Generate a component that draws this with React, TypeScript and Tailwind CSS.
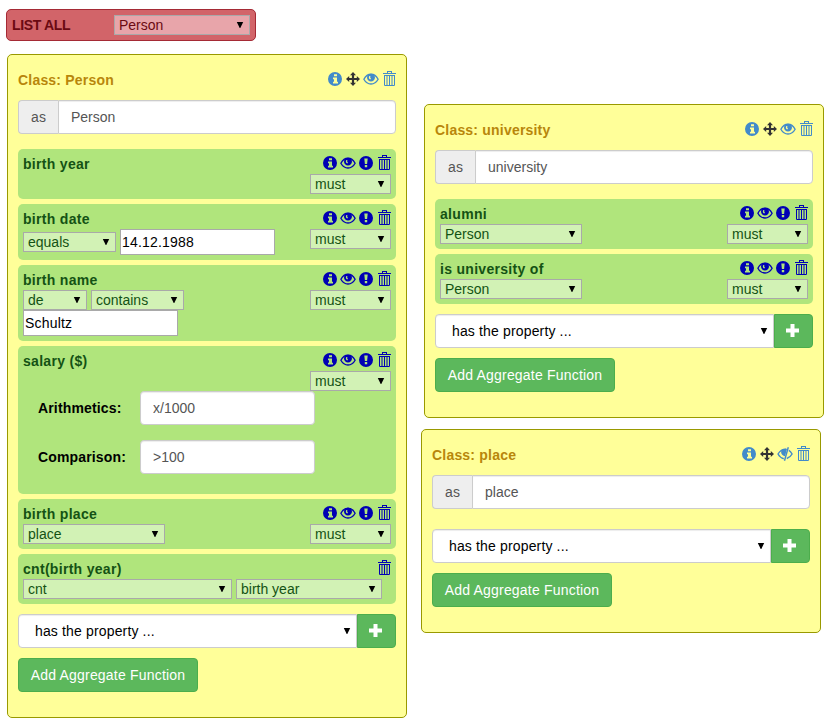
import React from "react";

type IconName = "info" | "move" | "eye" | "eyeClosed" | "alert" | "trash";

function Icon({ name }: { name: IconName }) {
  return (
    <svg className="block h-4 w-3.5 overflow-visible" viewBox="0 0 14 16" fill="currentColor">
      {name === "info" && (
        <path
          fillRule="evenodd"
          d="M7 1a7 7 0 1 0 0 14A7 7 0 0 0 7 1ZM6 3.200h3v2H6ZM5 6.500h4v4.300h1v1.700H5v-1.700h1V8.200H5Z"
        />
      )}
      {name === "alert" && (
        <path
          fillRule="evenodd"
          d="M7 1a7 7 0 1 0 0 14A7 7 0 0 0 7 1ZM5.300 3.400h3.400L8.100 9H5.900ZM5.800 10h2.400v2.200H5.800Z"
        />
      )}
      {name === "move" && (
        <path d="M7 1l3 3.200H8.100v2.700h2.700V5L14 8l-3.200 3V9.100H8.100v2.700H10L7 15l-3-3.200h1.900V9.100H3.200V11L0 8l3.200-3v1.900h2.700V4.200H4Z" />
      )}
      {name === "eye" && (
        <g>
          <path
            d="M-.1 8.200C1.600 5 4.200 3.100 7 3.100S12.400 5 14.100 8.200C12.400 11.300 9.800 13 7 13S1.600 11.300-.1 8.200Z"
            fill="none"
            stroke="currentColor"
            strokeWidth="1.350"
          />
          <path
            fillRule="evenodd"
            d="M4.200 3.200C5.900 2.500 8.100 2.500 9.800 3.200C11.400 5 11.300 7.900 9.900 9.300C8.300 10.900 5.700 10.900 4.100 9.300C2.700 7.900 2.600 5 4.200 3.200ZM5.300 5C4.400 6.300 4.900 8 6.300 8.500L7 7.500C6.100 7 6 6 6.500 5.200Z"
          />
        </g>
      )}
      {name === "eyeClosed" && (
        <g>
          <path
            d="M8 3.100C4.700 3.100 1.800 4.900 0 8C1.500 10.700 3.500 12.200 5.800 12.700M10.800 4.300C12.200 5.100 13.200 6.400 14.100 8C13 10 11.300 11.700 8.800 12.500"
            fill="none"
            stroke="currentColor"
            strokeWidth="1.4"
          />
          <path d="M4 3.500C5.500 2.700 7.400 2.500 9 2.800L7 10.300C5 10 3.400 8.500 3.200 6.500C3.100 5.300 3.400 4.200 4 3.500Z" />
          <path d="M10.300 1.200L6.500 14.800" fill="none" stroke="currentColor" strokeWidth="1.4" />
        </g>
      )}
      {name === "trash" && (
        <path
          fillRule="evenodd"
          d="M5 0h5v2h4v1H1V2h4ZM6 1v1h3V1ZM2 4h11v10.200l-.8.8H2.800L2 14.200ZM3 5v9h1.500V5ZM5.500 5v9H7V5ZM8 5v9h1.500V5ZM10.500 5v9H12V5Z"
        />
      )}
    </svg>
  );
}

function Icons({ names, header = false }: { names: IconName[]; header?: boolean }) {
  return (
    <div className={header ? "flex gap-1 text-[#428bca]" : "flex gap-1 pt-px text-[#0000b4]"}>
      {names.map((n) => (
        <span key={n} className={n === "move" ? "text-[#333]" : ""}>
          <Icon name={n} />
        </span>
      ))}
    </div>
  );
}

function Caret() {
  return (
    <svg className="block h-1.5 w-1.5 shrink-0 overflow-visible text-black" viewBox="0 0 6 6" fill="currentColor">
      <path d="M-.2 0h6.400L3.300 6h-.6Z" />
    </svg>
  );
}

function Select({ value, width }: { value: string; width: string }) {
  return (
    <div
      className={`flex h-5 shrink-0 items-center justify-between border border-[#a9a9a9] bg-[#d2f2b5] pr-1.5 pl-1 leading-[18px] text-[#145214] ${width}`}
    >
      <span>{value}</span>
      <Caret />
    </div>
  );
}

function PlainInput({ value }: { value: string }) {
  return (
    <input
      readOnly
      value={value}
      className="block h-[26px] w-[155px] border border-[#a9a9a9] bg-white px-px tracking-[0.2px] text-black outline-none"
    />
  );
}

function FormInput({ value, className }: { value: string; className: string }) {
  return (
    <input
      readOnly
      value={value}
      className={`block h-[34px] border border-[#ccc] bg-white px-3 text-[#555] shadow-[inset_0_1px_1px_rgba(0,0,0,0.075)] outline-none ${className}`}
    />
  );
}

type RowProps = { title: string; children?: React.ReactNode; aggregate?: boolean; height: string };

function Row({ title, children, aggregate = false, height }: RowProps) {
  return (
    <section className={`rounded-[5px] bg-[#b0e57c] p-[5px] ${height}`}>
      <header className="flex h-5 justify-between">
        <h3 className="font-bold tracking-[0.3px] text-[#145214]">{title}</h3>
        <Icons names={aggregate ? ["trash"] : ["info", "eye", "alert", "trash"]} />
      </header>
      <div className="flex items-start justify-between">
        <div>{children}</div>
        {!aggregate && <Select value="must" width="w-[81px]" />}
      </div>
    </section>
  );
}

function Field({ label, value }: { label: string; value: string }) {
  return (
    <label className="flex items-center pl-[15px]">
      <span className="w-[102px] font-bold tracking-[0.15px] text-black">{label}</span>
      <FormInput value={value} className="w-[175px] rounded" />
    </label>
  );
}

type PanelProps = { name: string; hidden?: boolean; className: string; children?: React.ReactNode };

function Panel({ name, hidden = false, className, children }: PanelProps) {
  return (
    <article className={`w-[400px] rounded-[5px] border border-[#999900] bg-[#ffff99] px-2.5 ${className}`}>
      <header className="flex justify-between pt-[15px]">
        <h2 className="h-[30px] font-bold tracking-[0.2px] text-[#b8860b]">Class: {name}</h2>
        <div className="pt-px">
          <Icons header names={["info", "move", hidden ? "eyeClosed" : "eye", "trash"]} />
        </div>
      </header>
      <div className="flex">
        <span className="flex w-10 items-center justify-center rounded-l border border-r-0 border-[#ccc] bg-[#eee] text-[#555]">
          as
        </span>
        <FormInput value={name} className="min-w-0 flex-1 rounded-r" />
      </div>
      {children && <div className="mt-[15px] flex flex-col gap-[5px]">{children}</div>}
      <div className={children ? "mt-2.5 flex h-[34px]" : "mt-5 flex h-[34px]"}>
        <div className="flex flex-1 items-center justify-between rounded-l border border-[#ccc] bg-white pr-1.5 pl-4 text-black shadow-[inset_0_1px_1px_rgba(0,0,0,0.075)]">
          <span className="tracking-[0.15px]">has the property ...</span>
          <Caret />
        </div>
        <button className="flex w-[39px] items-center justify-center rounded-r border border-[#4cae4c] bg-[#5cb85c] pr-0.5 pb-0.5 text-white">
          <svg className="h-[13px] w-[13px]" viewBox="0 0 13 13" fill="currentColor">
            <path d="M4.500 0h4v4.500H13v4H8.500V13h-4V8.500H0v-4h4.500Z" />
          </svg>
        </button>
      </div>
      <button className="mt-2.5 block h-[34px] w-[180px] rounded border border-[#4cae4c] bg-[#5cb85c] tracking-[0.2px] whitespace-nowrap text-white">
        Add Aggregate Function
      </button>
    </article>
  );
}

export default function App() {
  return (
    <main className="h-[724px] w-[829px] overflow-hidden bg-white font-['Liberation_Sans',Arial,sans-serif] text-sm leading-5">
      <div className="flex">
        <div className="w-[421px] shrink-0">
          <div className="mt-[9px] ml-1.5 flex h-8 w-[250px] items-center justify-between rounded-[5px] border border-[#a52a35] bg-[#d26469] px-[5px] text-[#6b0a12]">
            <span className="font-bold tracking-[-0.35px]">LIST ALL</span>
            <div className="flex h-5 w-[136px] items-center justify-between border border-[#a9a9a9] bg-[#e8a5aa] pr-1.5 pl-1 leading-[18px]">
              <span>Person</span>
              <Caret />
            </div>
          </div>
          <Panel name="Person" className="mt-[13px] ml-[7px] h-[664px]">
            <Row title="birth year" height="h-[50px]" />
            <Row title="birth date" height="h-14">
              <div className="flex items-center gap-1">
                <Select value="equals" width="w-[93px]" />
                <PlainInput value="14.12.1988" />
              </div>
            </Row>
            <Row title="birth name" height="h-[76px]">
              <div className="flex gap-1">
                <Select value="de" width="w-16" />
                <Select value="contains" width="w-[93px]" />
              </div>
              <PlainInput value="Schultz" />
            </Row>
            <Row title="salary ($)" height="h-[148px]">
              <div className="-mr-10 flex flex-col gap-[15px] pt-5">
                <Field label="Arithmetics:" value="x/1000" />
                <Field label="Comparison:" value=">100" />
              </div>
            </Row>
            <Row title="birth place" height="h-[50px]">
              <Select value="place" width="w-[142px]" />
            </Row>
            <Row title="cnt(birth year)" height="h-[50px]" aggregate>
              <div className="flex gap-1">
                <Select value="cnt" width="w-[209px]" />
                <Select value="birth year" width="w-[146px]" />
              </div>
            </Row>
          </Panel>
        </div>
        <div className="pt-[104px]">
          <Panel name="university" className="ml-[3px] h-[314px]">
            <Row title="alumni" height="h-[50px]">
              <Select value="Person" width="w-[142px]" />
            </Row>
            <Row title="is university of" height="h-[50px]">
              <Select value="Person" width="w-[142px]" />
            </Row>
          </Panel>
          <Panel name="place" hidden className="mt-[11px] h-[204px]" />
        </div>
      </div>
    </main>
  );
}
